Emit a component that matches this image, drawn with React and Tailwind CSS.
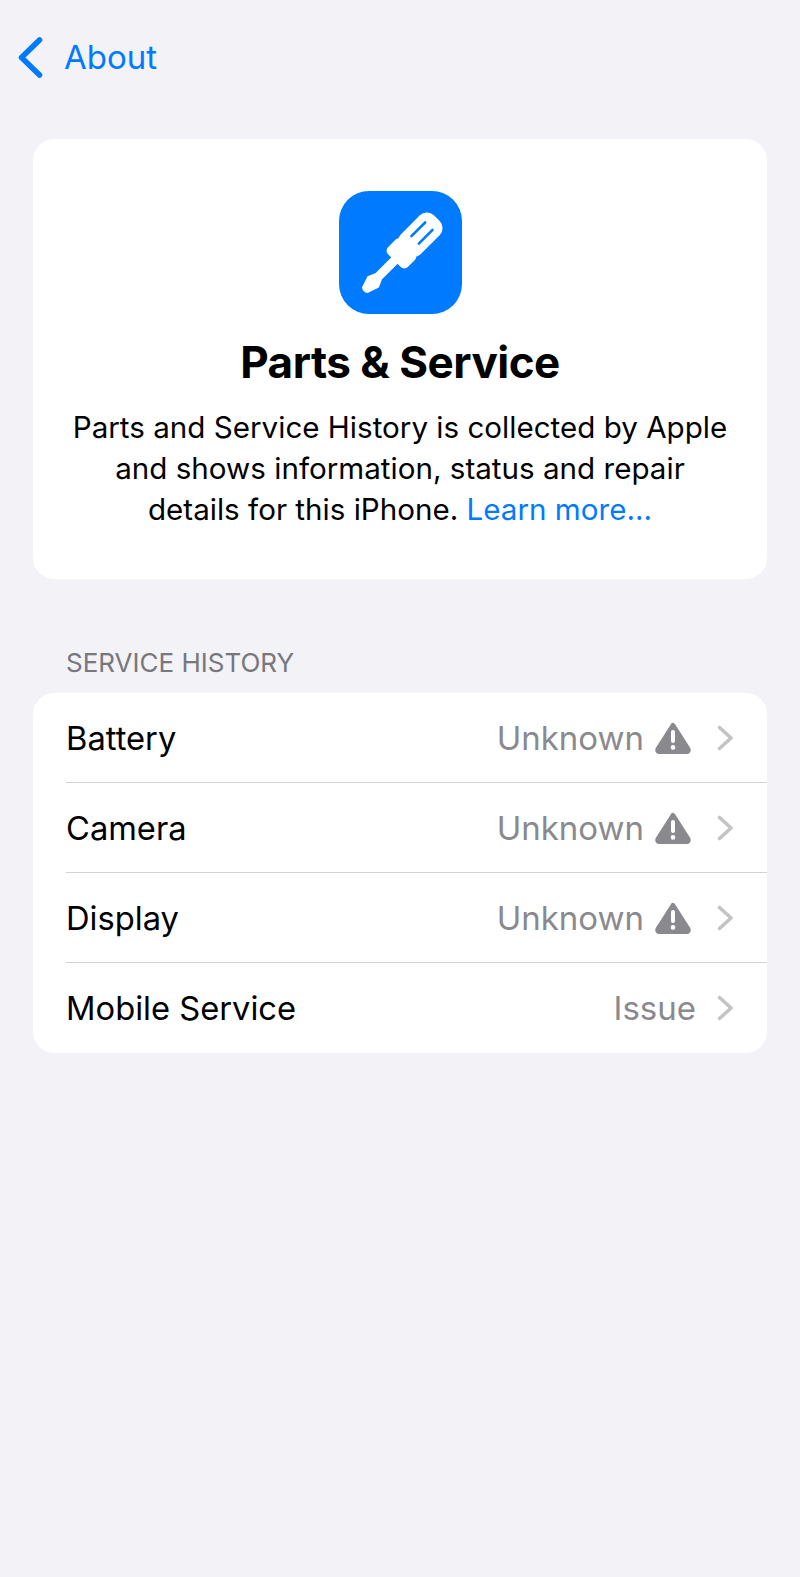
function WarningIcon() {
  return (
    <svg width="36" height="32" viewBox="0 0 36 32" className="shrink-0">
      <path
        d="M18 3.5 L33 27 Q33.8 29.5 31.5 29.5 L4.5 29.5 Q2.2 29.5 3 27 Z"
        fill="#8a8a8e"
        stroke="#8a8a8e"
        strokeWidth="5"
        strokeLinejoin="round"
      />
      <rect x="16" y="8" width="4" height="13" rx="2" fill="#fff" />
      <circle cx="18" cy="25.4" r="2.3" fill="#fff" />
    </svg>
  );
}

function Chevron() {
  return (
    <svg width="17" height="26" viewBox="0 0 17 26" className="shrink-0">
      <path
        d="M2.5 2.5 L14 13 L2.5 23.5"
        fill="none"
        stroke="#c4c4c7"
        strokeWidth="3.6"
        strokeLinecap="round"
        strokeLinejoin="round"
      />
    </svg>
  );
}

function Screwdriver() {
  return (
    <svg width="123" height="123" viewBox="0 0 123 123">
      <g transform="translate(25 100) rotate(-45)">
        <path
          d="M1 -4 L13 -8 L21 -4.5 L46 -4.5 L46 4.5 L21 4.5 L13 8 L1 4 Q-1.5 0 1 -4 Z"
          fill="#fff"
        />
        <rect x="43" y="-14" width="20" height="28" rx="5" fill="#fff" />
        <rect x="56" y="-14" width="47" height="28" rx="10" fill="#fff" />
        <rect x="71" y="-6.5" width="22" height="2.6" rx="1.3" fill="#007aff" />
        <rect x="71" y="3.9" width="22" height="2.6" rx="1.3" fill="#007aff" />
      </g>
    </svg>
  );
}

const rows = [
  { name: "Battery", value: "Unknown", warn: true },
  { name: "Camera", value: "Unknown", warn: true },
  { name: "Display", value: "Unknown", warn: true },
  { name: "Mobile Service", value: "Issue", warn: false },
];

export default function App() {
  return (
    <div className="min-h-[1577px] bg-[#f2f2f7] font-['Inter',sans-serif] text-black">
      {/* nav */}
      <div className="flex h-[139px] items-start pl-[18px] pt-[37px]">
        <svg width="25" height="41" viewBox="0 0 25 41" className="shrink-0">
          <path
            d="M21.5 3 L3.5 20.5 L21.5 38"
            fill="none"
            stroke="#007aff"
            strokeWidth="5.5"
            strokeLinecap="round"
            strokeLinejoin="round"
          />
        </svg>
        <span className="ml-[21px] text-[33px] leading-[41px] text-[#007aff]">About</span>
      </div>

      {/* header card */}
      <div className="mx-[33px] flex h-[440px] flex-col items-center rounded-[21px] bg-white pt-[52px]">
        <div className="flex h-[123px] w-[123px] items-center justify-center rounded-[30px] bg-[#007aff]">
          <Screwdriver />
        </div>
        <h1 className="mt-[20px] text-[44px] font-bold leading-[56px] tracking-[-0.5px]">Parts &amp; Service</h1>
        <p className="mt-[17px] w-[665px] text-center text-[29.6px] leading-[41px]">
          Parts and Service History is collected by Apple
          <br />
          and shows information, status and repair
          <br />
          details for this iPhone. <span className="text-[#007aff]">Learn more...</span>
        </p>
      </div>

      {/* section */}
      <div className="mt-[67px] pl-[66px] text-[26px] leading-[34px] text-[#77777c]">SERVICE HISTORY</div>
      <div className="mx-[33px] mt-[13px] overflow-hidden rounded-[21px] bg-white">
        {rows.map((r, i) => (
          <div key={r.name} className="pl-[33px]">
            <div
              className={`flex h-[90px] items-center pr-[33px] ${i < rows.length - 1 ? "border-b border-[#d1d1d6]" : ""}`}
            >
              <span className="flex-1 pt-[2px] text-[32.7px]">{r.name}</span>
              <span className="pt-[2px] text-[33px] text-[#8a8a8e]">{r.value}</span>
              {r.warn ? (
                <span className="ml-[11px]">
                  <WarningIcon />
                </span>
              ) : null}
              <span className={r.warn ? "ml-[26px]" : "ml-[21px]"}>
                <Chevron />
              </span>
            </div>
          </div>
        ))}
      </div>
    </div>
  );
}
